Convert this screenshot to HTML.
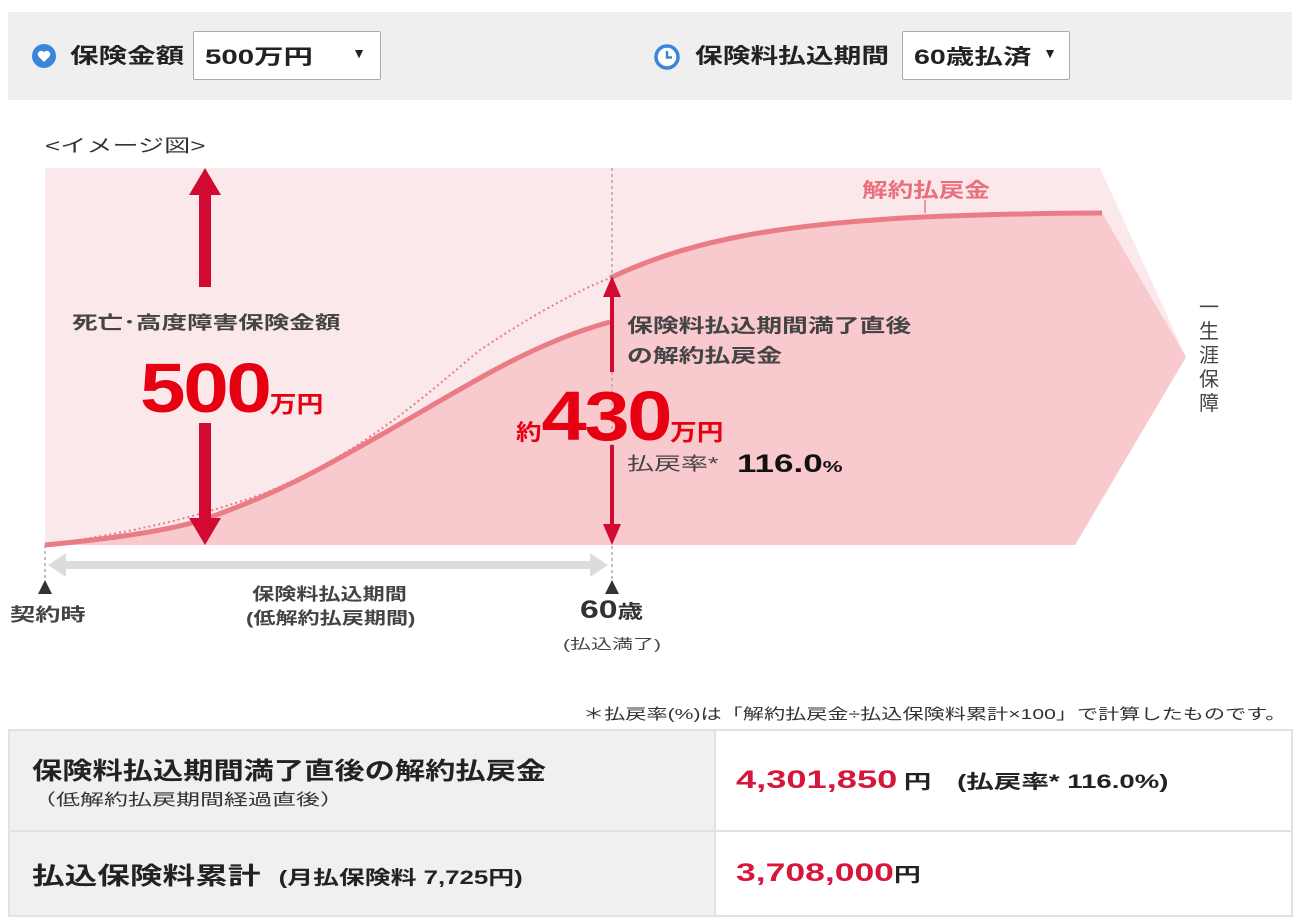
<!DOCTYPE html>
<html><head><meta charset="utf-8"><style>
*{margin:0;padding:0;box-sizing:border-box}
body{width:1300px;height:920px;background:#fff;font-family:"Liberation Sans","Noto Sans CJK JP",sans-serif;color:#333;position:relative;overflow:hidden}
.a{position:absolute;white-space:nowrap;transform-origin:0 0}
.s{display:inline-block;white-space:nowrap;transform-origin:0 50%}
.hdr{position:absolute;left:8px;top:12px;width:1284px;height:88px;background:#efefef}
.sel{position:absolute;background:#fff;border:1px solid #aaa;border-radius:2px;font-size:21px;font-weight:bold;color:#222;padding:9px 0 0 11px}
.sel span.t{position:absolute;right:12px;top:13px;font-size:14px}
table{position:absolute;left:8px;top:729px;width:1285px;border-collapse:collapse}
td{border:2px solid #e2e2e2;vertical-align:middle}
td.l{background:#f0f0f0;width:706px;padding-left:22px;font-weight:bold;color:#222}
td.r{padding-left:20px;font-weight:bold;color:#222}
.red{color:#d6163a}
</style></head><body>
<div class="hdr"></div>
<svg class="a" style="left:32px;top:44px" width="24" height="24" viewBox="0 0 24 24"><circle cx="12" cy="12" r="12" fill="#3a86d8"/><path d="M12 18 L6.5 12.5 A3.2 3.2 0 0 1 12 8.2 A3.2 3.2 0 0 1 17.5 12.5 Z" fill="#fff"/></svg>
<div class="a" style="left:70px;top:40px;font-size:21px;font-weight:bold;color:#222;transform:scaleX(1.36)">保険金額</div>
<div class="sel" style="left:193px;top:31px;width:188px;height:49px"><span class="s" style="transform:scaleX(1.4)">500万円</span><span class="t" style="right:14px">▼</span></div>
<svg class="a" style="left:654px;top:44px" width="26" height="26" viewBox="0 0 26 26"><circle cx="13" cy="13" r="11" fill="#fff" stroke="#3a86d8" stroke-width="3.5"/><path d="M13 7 V13.5 H18" fill="none" stroke="#3a86d8" stroke-width="2.5"/></svg>
<div class="a" style="left:695px;top:40px;font-size:21px;font-weight:bold;color:#222;transform:scaleX(1.32)">保険料払込期間</div>
<div class="sel" style="left:902px;top:31px;width:168px;height:49px"><span class="s" style="transform:scaleX(1.36)">60歳払済</span><span class="t">▼</span></div>
<div class="a" style="left:45px;top:132px;font-size:18px;color:#333;transform:scaleX(1.45)">&lt;イメージ図&gt;</div>

<svg class="a" style="left:0;top:0" width="1300" height="700">
<polygon points="45,168 1100,168 1186,357 1075,545 45,545" fill="#fbe8ea"/>
<path d="M45,545 C120,538 170,530 202,520 C260,500 300,480 336,460 C400,425 440,400 489,373 C540,345 580,330 610,322 L610,278 C680,245 760,225 923,217 C1000,214 1050,213 1102,213 L1186,357 L1075,545 Z" fill="#f8c9cd"/>
<path d="M45,545 C120,538 170,530 202,520 C260,500 300,480 336,460 C400,425 440,400 489,373 C540,345 580,330 610,322" fill="none" stroke="#ea7c86" stroke-width="5"/>
<path d="M610,278 C680,245 760,225 923,217 C1000,214 1050,213 1102,213" fill="none" stroke="#ea7c86" stroke-width="5"/>
<path d="M45,545 C150,530 200,515 260,495 C360,455 420,400 480,350 C540,310 580,290 610,278" fill="none" stroke="#ea7c86" stroke-width="2" stroke-dasharray="2,3"/>
<line x1="612" y1="168" x2="612" y2="580" stroke="#aaa" stroke-width="1.5" stroke-dasharray="3,3"/>
<line x1="45" y1="545" x2="45" y2="580" stroke="#aaa" stroke-width="1.5" stroke-dasharray="3,3"/>
<line x1="925" y1="200" x2="925" y2="213" stroke="#ea7c86" stroke-width="1.5"/>
<text x="862" y="197" font-size="20" font-weight="bold" fill="#ea6e7c" textLength="128" lengthAdjust="spacingAndGlyphs" font-family="Liberation Sans,Noto Sans CJK JP,sans-serif">解約払戻金</text>
<polygon points="205,168 221,195 211,195 211,287 199,287 199,195 189,195" fill="#d20a31"/>
<polygon points="205,545 221,518 211,518 211,423 199,423 199,518 189,518" fill="#d20a31"/>
<polygon points="612,276 621,297 614,297 614,372 610,372 610,297 603,297" fill="#d20a31"/>
<polygon points="612,545 621,524 614,524 614,445 610,445 610,524 603,524" fill="#d20a31"/>
<rect x="62" y="561" width="532" height="8" fill="#dcdcdc"/>
<polygon points="48,565 66,553 66,577" fill="#dcdcdc"/>
<polygon points="608,565 590,553 590,577" fill="#dcdcdc"/>
<polygon points="45,580 52,594 38,594" fill="#333"/>
<polygon points="612,580 619,594 605,594" fill="#333"/>
</svg>
<div class="a" style="left:72px;top:309px;font-size:18px;font-weight:bold;color:#444;transform:scaleX(1.42)">死亡･高度障害保険金額</div>
<div class="a" style="left:140px;top:348px;font-size:70px;font-weight:bold;color:#e60012;letter-spacing:-2px;transform:scaleX(1.17)">500<span style="font-size:23px;letter-spacing:0">万円</span></div>
<div class="a" style="left:627px;top:312px;font-size:19px;font-weight:bold;color:#444;line-height:30px;transform:scaleX(1.36)">保険料払込期間満了直後<br>の解約払戻金</div>
<div class="a" style="left:516px;top:376px;font-size:70px;font-weight:bold;color:#e60012;letter-spacing:-2px;transform:scaleX(1.16)"><span style="font-size:22px;letter-spacing:0">約</span>430<span style="font-size:23px;letter-spacing:0">万円</span></div>
<div class="a" style="left:627px;top:450px;font-size:18px;color:#444;transform:scaleX(1.5)">払戻率*</div>
<div class="a" style="left:737px;top:450px;font-size:25px;font-weight:bold;color:#111;transform:scaleX(1.4)">116.0<span style="font-size:16px">%</span></div>
<div class="a" style="left:1199px;top:296px;font-size:20px;color:#444;width:24px;line-height:24px;white-space:normal">一生涯保障</div>
<div class="a" style="left:10px;top:601px;font-size:18px;font-weight:bold;color:#444;transform:scaleX(1.4)">契約時</div>
<div class="a" style="left:246px;top:583px;font-size:17px;font-weight:bold;color:#444;line-height:24px;transform:scaleX(1.3)">&nbsp;保険料払込期間<br>(低解約払戻期間)</div>
<div class="a" style="left:580px;top:596px;font-size:25px;font-weight:bold;color:#333;transform:scaleX(1.35)">60<span style="font-size:19px">歳</span></div>
<div class="a" style="left:563px;top:634px;font-size:14px;color:#444;transform:scaleX(1.5)">(払込満了)</div>
<div class="a" style="left:583px;top:703px;font-size:15px;color:#333;transform:scaleX(1.41)">＊払戻率(%)は「解約払戻金÷払込保険料累計×100」で計算したものです。</div>
<table>
<tr style="height:101px"><td class="l"><div class="s" style="font-size:24px;transform:scaleX(1.26)">保険料払込期間満了直後の解約払戻金</div><br><div class="s" style="font-size:16px;font-weight:normal;color:#333;transform:scaleX(1.5)">（低解約払戻期間経過直後）</div></td><td class="r"><span class="s" style="transform:scaleX(1.45)"><span class="red" style="font-size:25px">4,301,850</span> <span style="font-size:19px">円</span>&nbsp;&nbsp;&nbsp;&nbsp;<span style="font-size:19px">(払戻率* 116.0%)</span></span></td></tr>
<tr style="height:85px"><td class="l"><span class="s" style="transform:scaleX(1.36)"><span style="font-size:24px">払込保険料累計</span>&nbsp;&nbsp;&nbsp;<span style="font-size:19px">(月払保険料 7,725円)</span></span></td><td class="r"><span class="s" style="transform:scaleX(1.42)"><span class="red" style="font-size:25px">3,708,000</span><span style="font-size:19px">円</span></span></td></tr>
</table>
</body></html>
